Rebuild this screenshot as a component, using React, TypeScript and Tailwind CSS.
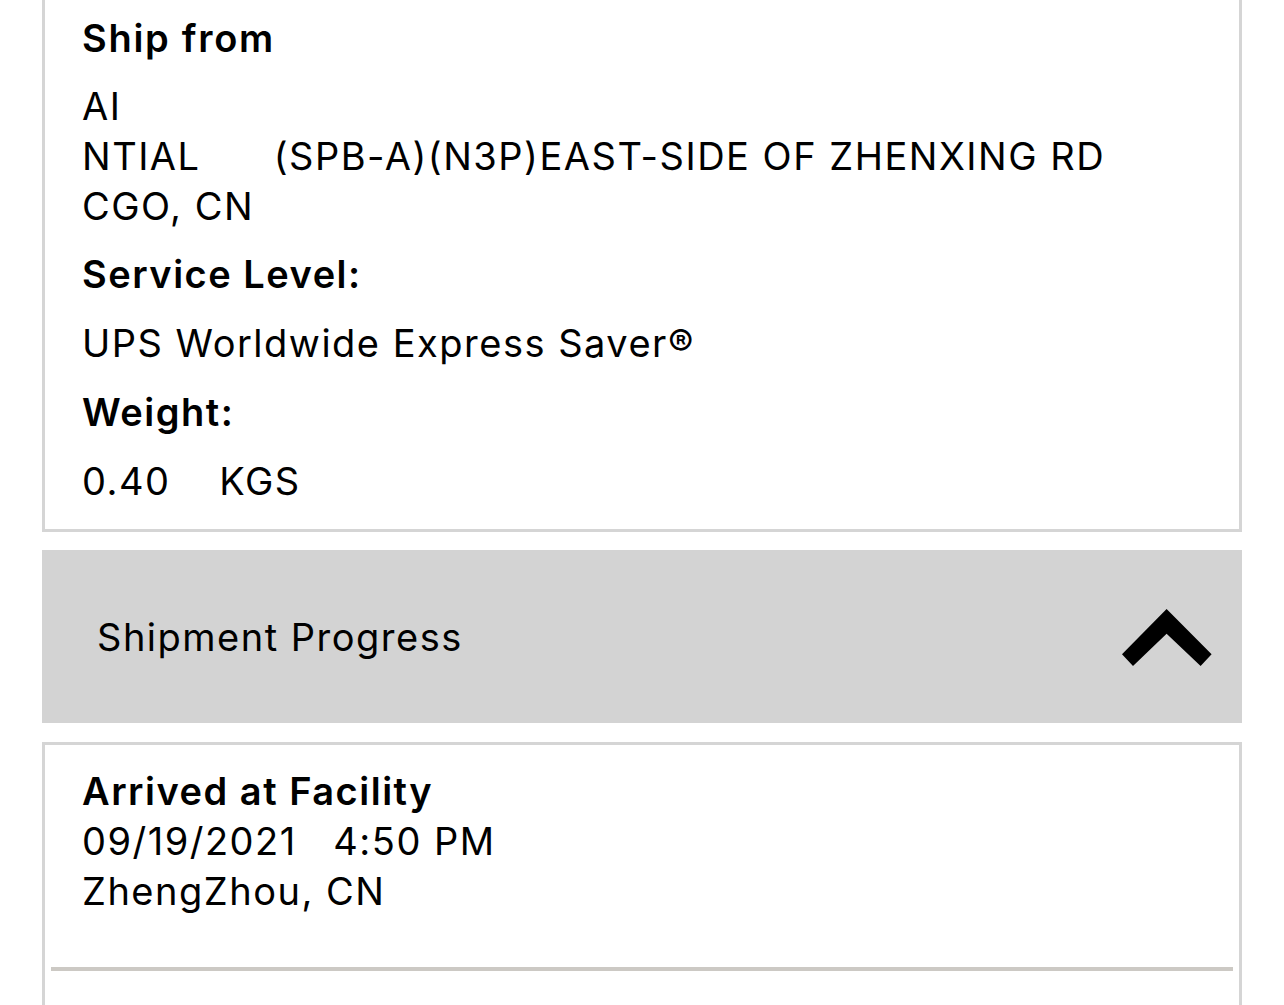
import React from "react";

const font = { fontFamily: "Inter, 'Noto Sans', sans-serif" };

export default function App() {
  return (
    <div
      className="w-[1284px] h-[1005px] overflow-hidden bg-white text-black text-[38px] leading-[50px] tracking-[1.5px]"
      style={font}
    >
      <div className="mx-[42px] border-x-[3px] border-b-[3px] border-[#d5d5d5] pl-[37px] pt-[13px] pb-[23px]">
        <div className="font-semibold tracking-[1.7px]">Ship from</div>
        <div className="mt-[18px] whitespace-pre">
          <div>AI</div>
          <div>{"NTIAL      (SPB-A)(N3P)EAST-SIDE OF ZHENXING RD"}</div>
          <div>CGO, CN</div>
        </div>
        <div className="mt-[18px] font-semibold">Service Level:</div>
        <div className="mt-[19px]">UPS Worldwide Express Saver®</div>
        <div className="mt-[19px] font-semibold">Weight:</div>
        <div className="mt-[19px] whitespace-pre">{"0.40    KGS"}</div>
      </div>

      <div className="mx-[42px] mt-[18px] h-[173px] bg-[#d3d3d3] flex items-center justify-between pl-[55px] pr-[30px]">
        <span>Shipment Progress</span>
        <svg width="90" height="57" viewBox="0 0 90 57" className="mt-[2px]">
          <polygon points="0,45.3 44.6,0 89.6,45.3 78.6,57 44.6,24.7 11,57" fill="#000" />
        </svg>
      </div>

      <div className="mx-[42px] mt-[19px] border-x-[3px] border-t-[3px] border-[#d5d5d5] h-[400px]">
        <div className="pl-[37px] pt-[21px] pb-[51px]">
          <div className="font-semibold">Arrived at Facility</div>
          <div className="whitespace-pre">{"09/19/2021   4:50 PM"}</div>
          <div>ZhengZhou, CN</div>
        </div>
        <div className="mx-[6px] h-[4px] bg-[#ccc9c4]" />
      </div>
    </div>
  );
}
